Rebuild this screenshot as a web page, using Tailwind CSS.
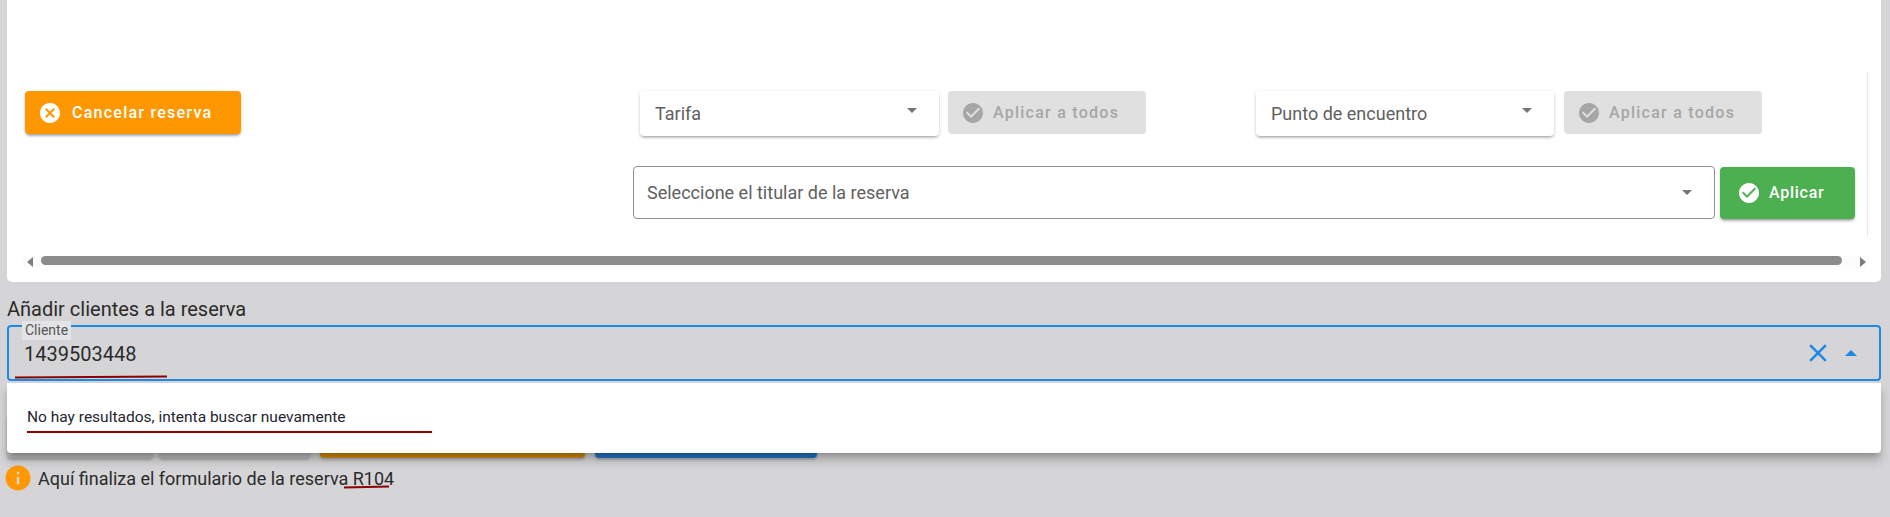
<!DOCTYPE html>
<html lang="es">
<head>
  <meta charset="UTF-8" />
  <title>Reserva</title>
  <script src="https://cdn.jsdelivr.net/npm/@tailwindcss/browser@4"></script>
</head>
<body class="bg-[#d5d5d7] font-['Roboto',sans-serif] h-[517px] overflow-hidden">
  <div class="pl-[7px] w-[1881px]">

    <!-- Card -->
    <div class="relative h-[282px] bg-white rounded-b-[5px] pt-[91px] pl-[18px]">
      <div class="flex items-start">
        <button class="w-[216px] h-[43px] bg-[#ff9800] text-white rounded-[4px] shadow-[0_3px_3px_-2px_rgba(0,0,0,.3),0_2px_3px_rgba(0,0,0,.18)] flex items-center pl-[13px] text-[16px] font-medium tracking-[1.25px]">
          <svg class="w-6 h-6 fill-white" viewBox="0 0 24 24"><path d="M12 2C6.47 2 2 6.47 2 12s4.47 10 10 10 10-4.47 10-10S17.53 2 12 2zm5 13.59L15.59 17 12 13.41 8.41 17 7 15.59 10.59 12 7 8.41 8.41 7 12 10.59 15.59 7 17 8.41 13.41 12 17 15.59z"/></svg>
          <span class="ml-[10px]">Cancelar reserva</span>
        </button>

        <div class="ml-[399px] w-[299px] h-[45px] bg-white rounded-[4px] shadow-[0_2px_3px_-1px_rgba(0,0,0,.35),0_1px_4px_rgba(0,0,0,.12)] flex items-center justify-between pl-[15px] pr-[22px] text-[18px] text-[#5f5f5f]">
          <span>Tarifa</span>
          <span class="-mt-[6px] w-0 h-0 border-x-[5px] border-t-[5px] border-x-transparent border-t-[#757575]"></span>
        </div>
        <button class="ml-[9px] w-[198px] h-[43px] bg-[#e0e0e0] text-[#a6a6a6] rounded-[4px] flex items-center pl-[13px] text-[16px] font-medium tracking-[1.25px]">
          <svg class="w-6 h-6 fill-[#a6a6a6]" viewBox="0 0 24 24"><path d="M12 2C6.48 2 2 6.48 2 12s4.48 10 10 10 10-4.48 10-10S17.52 2 12 2zm-2 15l-5-5 1.41-1.41L10 14.17l7.59-7.59L19 8l-9 9z"/></svg>
          <span class="ml-[8px]">Aplicar a todos</span>
        </button>

        <div class="ml-[110px] w-[298px] h-[45px] bg-white rounded-[4px] shadow-[0_2px_3px_-1px_rgba(0,0,0,.35),0_1px_4px_rgba(0,0,0,.12)] flex items-center justify-between pl-[15px] pr-[22px] text-[18px] text-[#5f5f5f]">
          <span>Punto de encuentro</span>
          <span class="-mt-[6px] w-0 h-0 border-x-[5px] border-t-[5px] border-x-transparent border-t-[#757575]"></span>
        </div>
        <button class="ml-[10px] w-[198px] h-[43px] bg-[#e0e0e0] text-[#a6a6a6] rounded-[4px] flex items-center pl-[13px] text-[16px] font-medium tracking-[1.25px]">
          <svg class="w-6 h-6 fill-[#a6a6a6]" viewBox="0 0 24 24"><path d="M12 2C6.48 2 2 6.48 2 12s4.48 10 10 10 10-4.48 10-10S17.52 2 12 2zm-2 15l-5-5 1.41-1.41L10 14.17l7.59-7.59L19 8l-9 9z"/></svg>
          <span class="ml-[8px]">Aplicar a todos</span>
        </button>
      </div>

      <div class="flex items-start mt-[30px] ml-[608px]">
        <div class="w-[1082px] h-[53px] border border-[#8f8f8f] rounded-[4px] flex items-center justify-between pl-[13px] pr-[22px] text-[18px] text-[#5f5f5f]">
          <span>Seleccione el titular de la reserva</span>
          <span class="w-0 h-0 border-x-[5px] border-t-[5px] border-x-transparent border-t-[#757575]"></span>
        </div>
        <button class="ml-[5px] mt-px w-[135px] h-[52px] bg-[#4caf50] text-white rounded-[4px] shadow-[0_3px_3px_-2px_rgba(0,0,0,.3),0_2px_3px_rgba(0,0,0,.18)] flex items-center pl-[17px] text-[16px] font-medium tracking-[.75px]">
          <svg class="w-6 h-6 fill-white" viewBox="0 0 24 24"><path d="M12 2C6.48 2 2 6.48 2 12s4.48 10 10 10 10-4.48 10-10S17.52 2 12 2zm-2 15l-5-5 1.41-1.41L10 14.17l7.59-7.59L19 8l-9 9z"/></svg>
          <span class="ml-[8px]">Aplicar</span>
        </button>
      </div>

      <!-- Horizontal scrollbar -->
      <div class="mt-[37px] -ml-[3px] w-[1845px] h-[11px] bg-[#fcfcfc] flex items-start">
        <span class="mt-[1px] ml-[5px] w-0 h-0 border-y-[5px] border-r-[6px] border-y-transparent border-r-[#7d7d7d]"></span>
        <div class="ml-[8px] w-[1801px] h-[9px] rounded-full bg-[#8c8c8c]"></div>
        <span class="mt-[1px] ml-[18px] w-0 h-0 border-y-[5px] border-l-[6px] border-y-transparent border-l-[#7d7d7d]"></span>
      </div>

      <!-- Scroll container edge -->
      <div class="absolute left-[1860px] top-[72px] w-px h-[164px] bg-[#e8e8e8]"></div>
    </div>

    <!-- Clients -->
    <h2 class="mt-[15px] text-[20px] leading-[24px] text-[#2b2b2b]">Añadir clientes a la reserva</h2>

    <div class="relative mt-[4px]">
      <div class="h-[56px] border-2 border-[#1e88e5] rounded-[4px] flex items-center justify-end pl-[15px] pr-[22px]">
        <span class="mr-auto text-[20px] text-[#2b2b2b] pt-[2px]">1439503448</span>
        <svg class="w-[30px] h-[30px] fill-[#1e88e5]" viewBox="0 0 24 24"><path d="M19 6.41L17.59 5 12 10.59 6.41 5 5 6.41 10.59 12 5 17.59 6.41 19 12 13.41 17.59 19 19 17.59 13.41 12z"/></svg>
        <span class="ml-[12px] w-0 h-0 border-x-[6px] border-b-[6px] border-x-transparent border-b-[#1e88e5]"></span>
      </div>
      <span class="absolute left-[15px] -top-[4px] px-[3px] h-[19px] leading-[19px] bg-[#e3e4e5] text-[14px] text-[#555]">Cliente</span>

      <!-- Dropdown -->
      <div class="absolute z-10 left-0 top-[58px] w-[1874px] h-[70px] bg-white rounded-b-[4px] shadow-[0_5px_6px_-3px_rgba(0,0,0,.25),0_8px_10px_1px_rgba(0,0,0,.16)] flex items-center pl-[20px] text-[15.5px] text-[#1f2430]">
        No hay resultados, intenta buscar nuevamente
      </div>
    </div>

    <!-- Buttons behind the dropdown -->
    <div class="flex mt-[34px] h-[43px]">
      <div class="w-[146px] rounded-[4px] bg-[#bdbdbf] shadow-[0_2px_3px_rgba(0,0,0,.2)]"></div>
      <div class="ml-[6px] w-[151px] rounded-[4px] bg-[#bdbdbf] shadow-[0_2px_3px_rgba(0,0,0,.2)]"></div>
      <div class="ml-[10px] w-[265px] rounded-[4px] bg-[#d68c0f] shadow-[0_2px_3px_rgba(0,0,0,.2)]"></div>
      <div class="ml-[10px] w-[222px] rounded-[4px] bg-[#2079c8] shadow-[0_2px_3px_rgba(0,0,0,.2)]"></div>
    </div>

    <!-- End of form -->
    <div class="flex items-center mt-[5px] -ml-[4px] text-[18px] text-[#2b2b2b]">
      <svg class="w-[30px] h-[30px] fill-[#ff9800]" viewBox="0 0 24 24"><path d="M12 2C6.48 2 2 6.48 2 12s4.48 10 10 10 10-4.48 10-10S17.52 2 12 2zm1 15h-2v-6h2v6zm0-8h-2V7h2v2z"/></svg>
      <span class="ml-[5px]">Aquí finaliza el formulario de la reserva R104</span>
    </div>
  </div>

  <!-- Red underlines drawn over the screenshot -->
  <div class="absolute z-20 left-[15px] top-[376px] w-[152px] h-[2px] bg-[#8b0000] rotate-[-.3deg]"></div>
  <div class="absolute z-20 left-[27px] top-[431px] w-[405px] h-[2px] bg-[#8b0000]"></div>
  <div class="absolute z-20 left-[344px] top-[486px] w-[45px] h-[2px] bg-[#8b0000] rotate-[-1deg]"></div>
</body>
</html>
